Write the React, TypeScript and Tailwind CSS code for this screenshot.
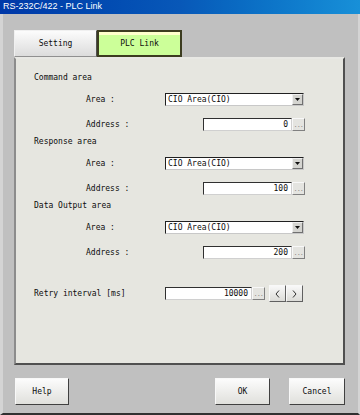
const mono = "font-['DejaVu_Sans_Mono','Liberation_Mono',monospace]";

const DotsButton = () => (
  <div className="flex h-[13px] w-[13px] items-end justify-center border border-t-[#f8f8f8] border-l-[#f8f8f8] border-b-[#808080] border-r-[#808080] bg-[#e4e4e0] pb-[2px]">
    <span className="text-[6px] leading-[6px] tracking-[-0.5px] text-[#707070]">...</span>
  </div>
);

const Combo = () => (
  <div className="flex h-[13px] w-[139px] border border-t-[#202020] border-l-[#202020] border-b-[#c8c8c8] border-r-[#c8c8c8] bg-white">
    <span className="flex-1 pl-[2px] text-[8px] leading-[11px]">CIO Area(CIO)</span>
    <div className="flex w-[11px] items-center justify-center border border-t-[#f0f0f0] border-l-[#f0f0f0] border-b-[#707070] border-r-[#707070] bg-[#d4d4d0]">
      <svg width="5" height="3" viewBox="0 0 5 3">
        <polygon points="0,0 5,0 2.5,3" fill="#101010" />
      </svg>
    </div>
  </div>
);

const ValueInput = ({ value, width }: { value: string; width: number }) => (
  <div className="flex items-center">
    <div
      className="h-[13px] border border-t-[#303030] border-l-[#303030] border-b-[#d0d0d0] border-r-[#d0d0d0] bg-white pr-[3px] text-right text-[8px] leading-[11px]"
      style={{ width }}
    >
      {value}
    </div>
    <DotsButton />
  </div>
);

const Section = ({ title, address }: { title: string; address: string }) => (
  <div className="flex flex-col">
    <div className="h-[14px] pl-[18px] leading-[14px]">{title}</div>
    <div className="mt-[8px] flex h-[13px] items-center pl-[70px]">
      <span className="w-[79px]">Area :</span>
      <Combo />
    </div>
    <div className="mt-[12px] flex h-[13px] items-center pl-[70px]">
      <span className="w-[117px]">Address :</span>
      <ValueInput value={address} width={89} />
    </div>
  </div>
);

const BottomButton = ({ label, width }: { label: string; width: number }) => (
  <div
    className="flex h-[27px] items-center justify-center border border-t-[#f8f8f8] border-l-[#f8f8f8] border-b-[#404040] border-r-[#404040] bg-gradient-to-b from-[#fcfcfc] to-[#e0e0dc] text-[8px]"
    style={{ width }}
  >
    {label}
  </div>
);

const Chevron = ({ dir }: { dir: "left" | "right" }) => (
  <div className="flex h-[17px] w-[17px] items-center justify-center border border-t-[#f8f8f8] border-l-[#f8f8f8] border-b-[#606060] border-r-[#606060] bg-gradient-to-b from-[#f8f8f8] to-[#dcdcd8]">
    <svg width="5" height="8" viewBox="0 0 5 8">
      {dir === "left" ? (
        <polyline points="4,0.5 1,4 4,7.5" fill="none" stroke="#303030" strokeWidth="1" />
      ) : (
        <polyline points="1,0.5 4,4 1,7.5" fill="none" stroke="#303030" strokeWidth="1" />
      )}
    </svg>
  </div>
);

export default function App() {
  return (
    <div className={`flex h-[415px] w-[360px] flex-col bg-[#c0c0c0] text-[8px] text-[#0c0c0c] ${mono}`}>
      <div className="flex h-[14px] items-center bg-gradient-to-r from-[#0038a8] via-[#0858b8] to-[#1890d8] pl-[3px] font-['Liberation_Sans',sans-serif] text-[9px] text-white">
        RS-232C/422 - PLC Link
      </div>
      <div className="flex flex-1 flex-col border-b-2 border-l-[3px] border-r-2 border-b-[#303030] border-l-[#d4d4d4] border-r-[#d4d4d4] pl-[11px] pt-[16px]">
        <div className="flex h-[27px]">
          <div className="flex w-[83px] items-center justify-center border border-t-[#f0f0f0] border-l-[#f0f0f0] border-b-[#909090] border-r-[#505050] bg-gradient-to-b from-[#fcfcfc] to-[#dcdcdc] text-[8px]">
            Setting
          </div>
          <div className="flex w-[85px] flex-col border-2 border-[#3c3c20] bg-[#ccff99]">
            <div className="h-[3px] bg-[#ffffcc]" />
            <div className="flex flex-1 items-center justify-center pb-[3px]">PLC Link</div>
          </div>
        </div>
        <div className="flex h-[308px] w-[331px] flex-col border-2 border-t-[#e8e8e4] border-l-[#8c8c8c] border-b-[#505050] border-r-[#505050] bg-[#e6e6e0] pt-[12px]">
          <Section title="Command area" address="0" />
          <div className="mt-[4px]">
            <Section title="Response area" address="100" />
          </div>
          <div className="mt-[4px]">
            <Section title="Data Output area" address="200" />
          </div>
          <div className="mt-[26px] flex h-[17px] items-center pl-[18px]">
            <span className="w-[131px]">Retry interval [ms]</span>
            <ValueInput value="10000" width={87} />
            <div className="ml-[4px] flex">
              <Chevron dir="left" />
              <Chevron dir="right" />
            </div>
          </div>
        </div>
        <div className="mt-[13px] flex pr-[13px]">
          <div className="ml-[1px]">
            <BottomButton label="Help" width={54} />
          </div>
          <div className="ml-auto flex gap-[19px]">
            <BottomButton label="OK" width={55} />
            <BottomButton label="Cancel" width={56} />
          </div>
        </div>
      </div>
    </div>
  );
}
